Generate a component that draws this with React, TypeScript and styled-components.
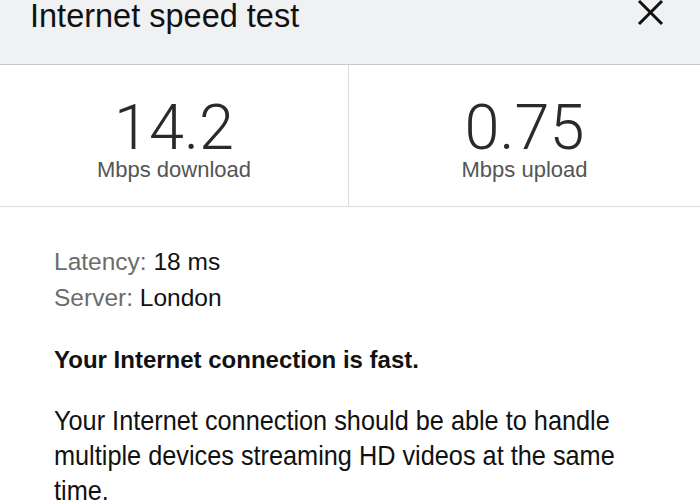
import React from "react";
import styled, { createGlobalStyle } from "styled-components";

const Global = createGlobalStyle`
  html, body { margin: 0; padding: 0; background: #ffffff; }
  body { font-family: "Liberation Sans", Arial, sans-serif; color: #111; width: 700px; height: 500px; overflow: hidden; }
`;

const Page = styled.div`
  width: 700px;
  height: 500px;
  overflow: hidden;
  background: #fff;
`;

const Header = styled.header`
  height: 64px;
  background: #f0f1f3;
  border-bottom: 1px solid #c8c8c8;
  display: flex;
  justify-content: space-between;
  align-items: flex-start;
  padding: 0 36px 0 30px;
`;

const Title = styled.h1`
  margin: 0;
  font-size: 32.5px;
  font-weight: 400;
  line-height: 32px;
  color: #111;
`;

const CloseButton = styled.button`
  border: none;
  background: none;
  padding: 0;
  width: 27px;
  height: 26px;
  display: flex;
  cursor: pointer;
`;

const Stats = styled.section`
  display: grid;
  grid-template-columns: 349px 1fr;
  height: 141px;
  border-bottom: 1px solid #dcdcdc;
`;

const Stat = styled.div<{ $divider?: boolean }>`
  display: flex;
  flex-direction: column;
  align-items: center;
  padding-top: 31px;
  border-right: ${(p) => (p.$divider ? "1px solid #dcdcdc" : "none")};
`;

const Value = styled.div`
  font-family: Roboto, "Liberation Sans", sans-serif;
  font-weight: 300;
  font-size: 63px;
  line-height: 63px;
  color: #2a2a2a;
`;

const Unit = styled.div`
  margin-top: 0;
  font-size: 22px;
  line-height: 22px;
  color: #555;
`;

const Body = styled.section`
  padding: 37px 0 0 54px;
`;

const InfoLine = styled.div`
  font-size: 24.5px;
  line-height: 36px;
  color: #111;
`;

const Label = styled.span`
  color: #6c6c6c;
`;

const Verdict = styled.div`
  margin-top: 26px;
  font-size: 24px;
  line-height: 36px;
  font-weight: 700;
  color: #111;
`;

const Description = styled.p`
  margin: 25px 0 0 0;
  width: 640px;
  font-size: 28px;
  line-height: 35px;
  color: #111;
  transform: scaleX(0.903);
  transform-origin: left top;
`;

export default function App() {
  return (
    <Page>
      <Global />
      <Header>
        <Title>Internet speed test</Title>
        <CloseButton aria-label="Close">
          <svg width="27" height="26" viewBox="0 0 27 26">
            <path d="M2 1 L25 24 M25 1 L2 24" stroke="#111" strokeWidth="3" fill="none" />
          </svg>
        </CloseButton>
      </Header>
      <Stats>
        <Stat $divider>
          <Value>14.2</Value>
          <Unit>Mbps download</Unit>
        </Stat>
        <Stat>
          <Value>0.75</Value>
          <Unit>Mbps upload</Unit>
        </Stat>
      </Stats>
      <Body>
        <InfoLine>
          <Label>Latency:</Label> 18 ms
        </InfoLine>
        <InfoLine>
          <Label>Server:</Label> London
        </InfoLine>
        <Verdict>Your Internet connection is fast.</Verdict>
        <Description>
          Your Internet connection should be able to handle multiple devices streaming HD videos at the same time.
        </Description>
      </Body>
    </Page>
  );
}
